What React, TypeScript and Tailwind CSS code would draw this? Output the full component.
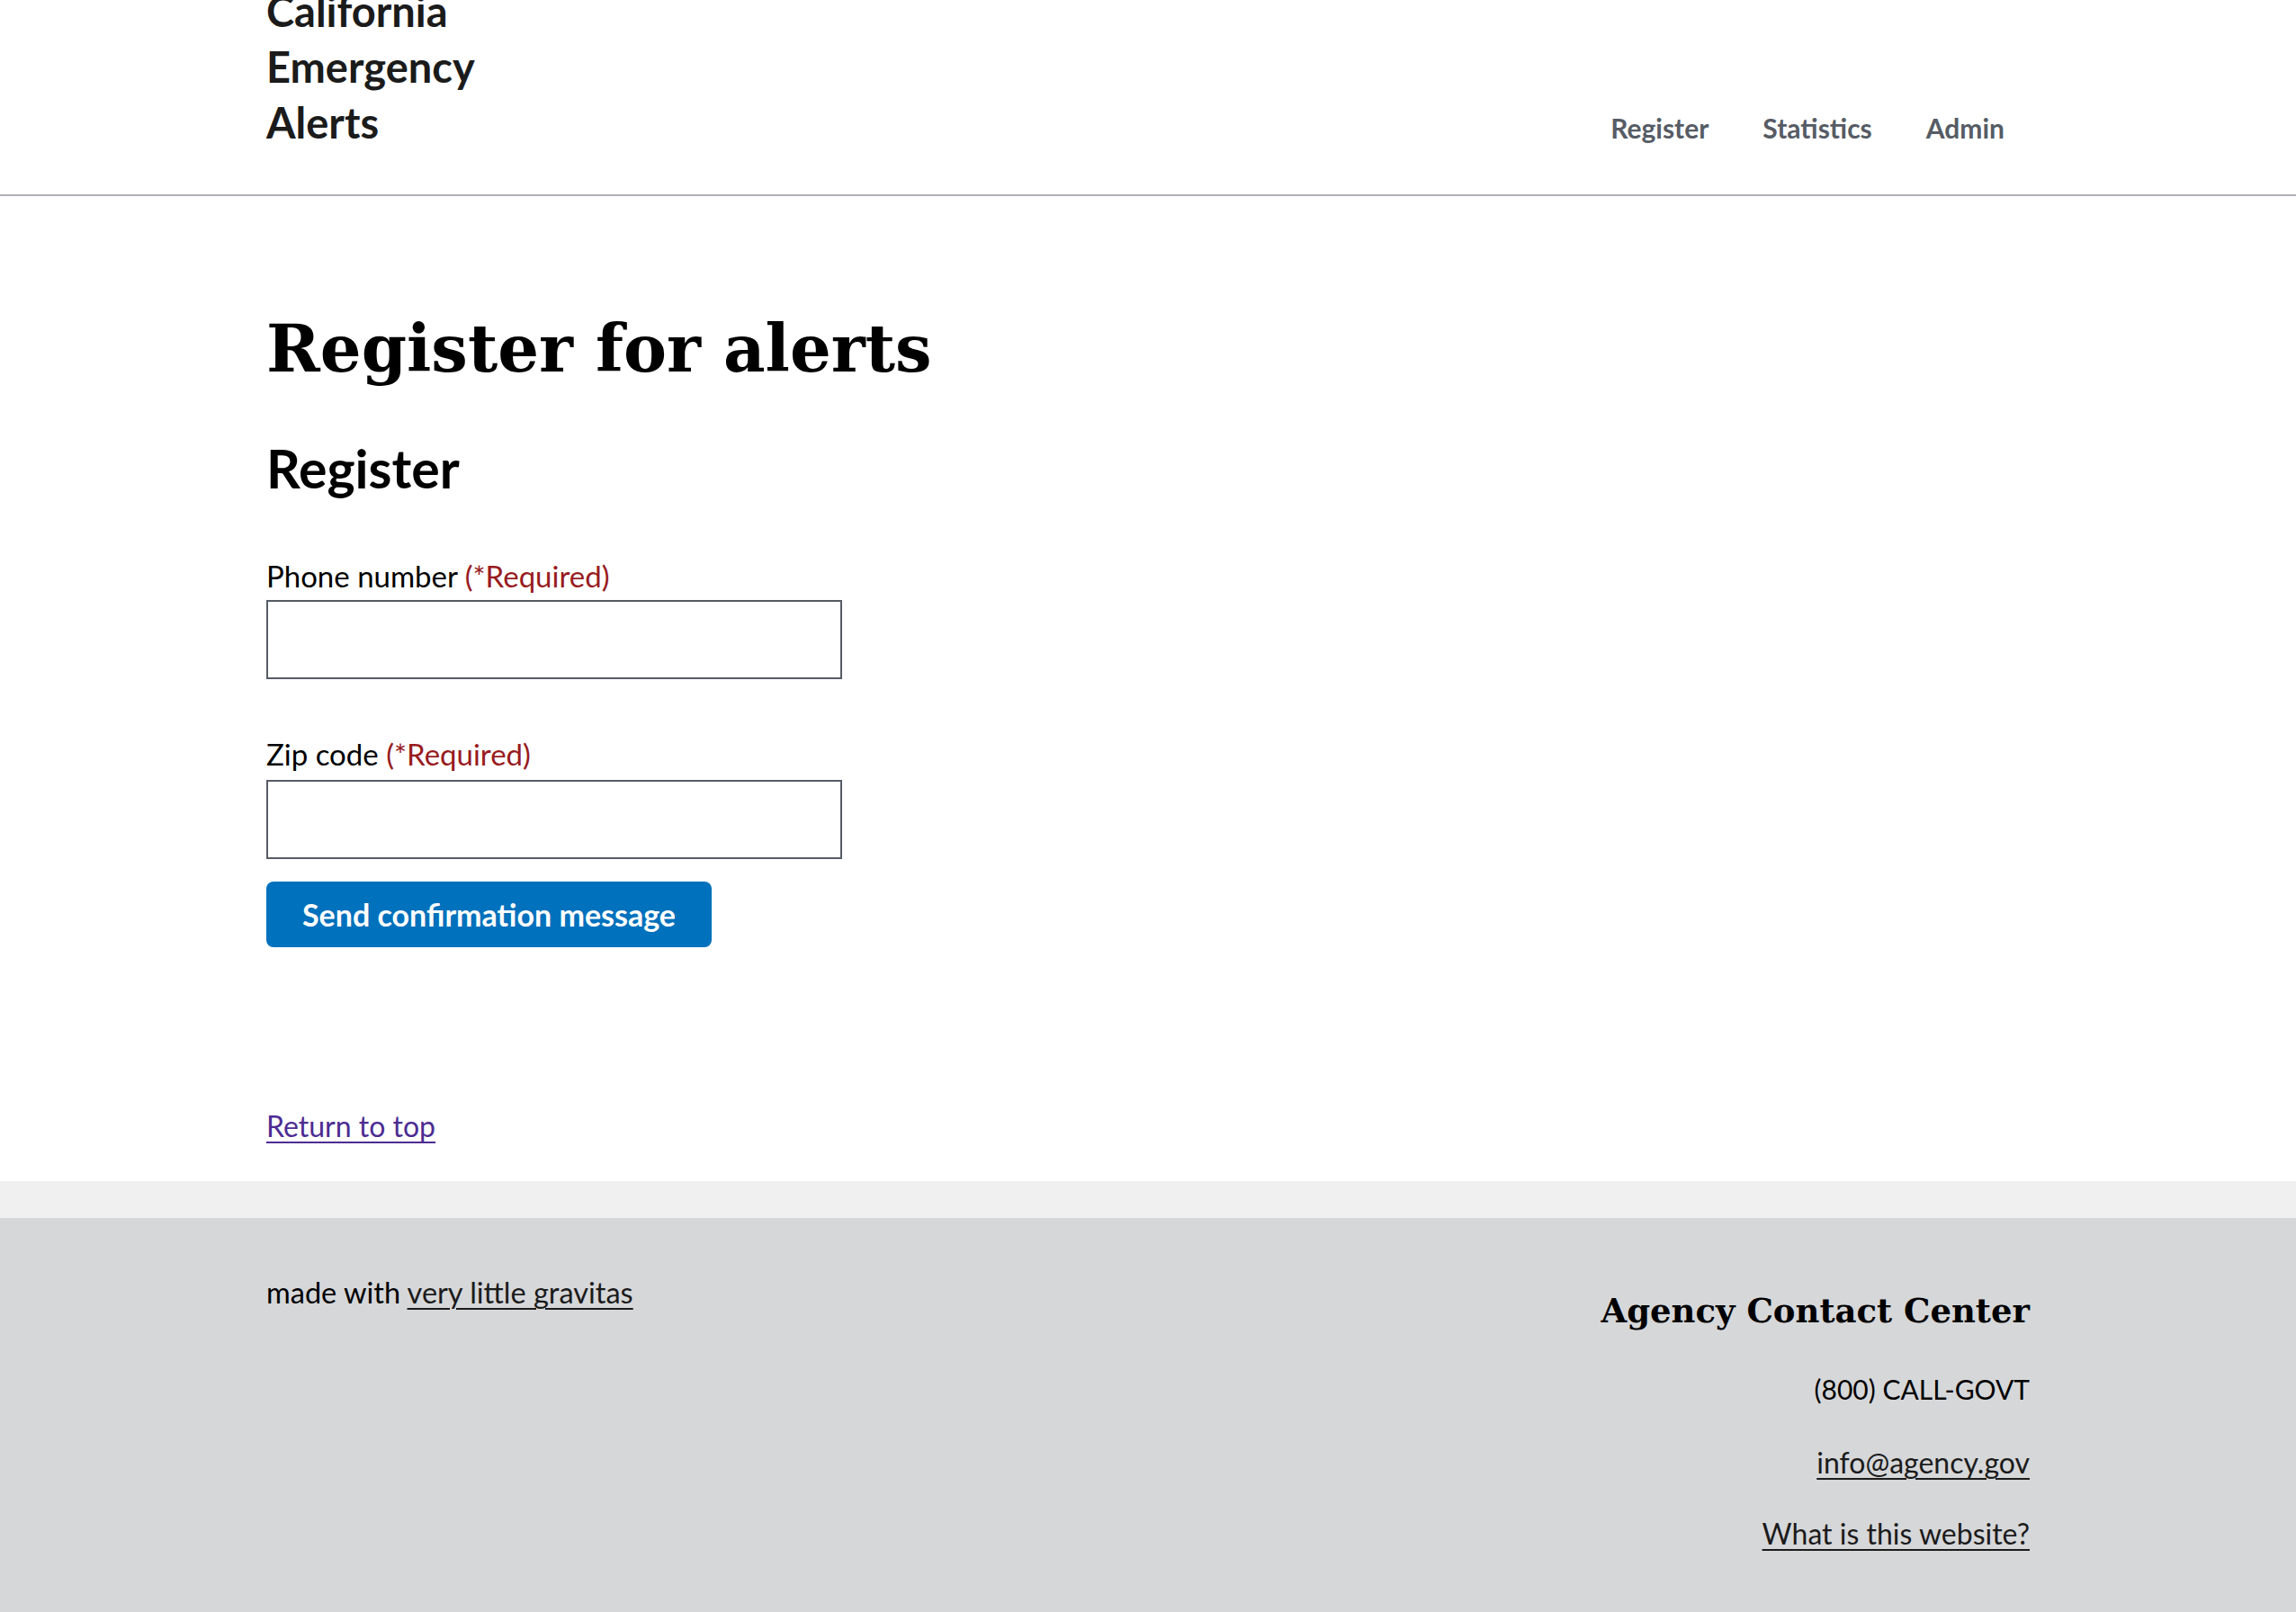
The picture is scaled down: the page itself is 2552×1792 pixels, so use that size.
export default function App() {
  return (
    <div className="min-h-[1792px] bg-[#d6d7d9] [font-family:Lato,sans-serif] text-[#1b1b1b]">
      <header className="bg-white border-b-2 border-[#aeb0b5]">
        <div className="mx-auto w-[1960px] h-[216px] flex items-end justify-between">
          <div className="mb-[49px] text-[47px] leading-[62px] font-bold text-[#1b1b1b]">
            <div>California</div>
            <div>Emergency</div>
            <div>Alerts</div>
          </div>
          <nav className="mb-[54px] flex text-[30px] leading-[40px] font-bold text-[#565c65]">
            <a href="#" className="px-[30px]">Register</a>
            <a href="#" className="px-[30px]">Statistics</a>
            <a href="#" className="pl-[30px] pr-[28px]">Admin</a>
          </nav>
        </div>
      </header>

      <main className="bg-white">
        <div className="mx-auto w-[1960px] pt-[130px] pb-[39px]">
          <h1 className="[font-family:'DejaVu_Serif',serif] text-[72px] leading-[80px] font-bold text-black">
            Register for alerts
          </h1>
          <h2 className="mt-[60px] text-[59px] leading-[66px] font-bold text-black">Register</h2>

          <form className="flex flex-col items-start">
            <label className="mt-[64px] text-[33px] leading-[44px] text-black">
              Phone number <span className="text-[#981b1e]">(*Required)</span>
            </label>
            <input type="text" className="mt-[5px] h-[88px] w-[640px] border-2 border-[#565c65] bg-white" />

            <label className="mt-[61px] text-[33px] leading-[44px] text-black">
              Zip code <span className="text-[#981b1e]">(*Required)</span>
            </label>
            <input type="text" className="mt-[7px] h-[88px] w-[640px] border-2 border-[#565c65] bg-white" />

            <button type="button" className="mt-[25px] h-[73px] px-[40px] rounded-[8px] bg-[#0071bc] text-white text-[34px] font-bold">
              Send confirmation message
            </button>
          </form>

          <div className="mt-[177px] text-[32px] leading-[44px]">
            <a href="#" className="text-[#4c2c92] underline decoration-2 underline-offset-[5px]">Return to top</a>
          </div>
        </div>
      </main>

      <div className="h-[41px] bg-[#f0f0f0]" />

      <footer className="bg-[#d6d7d9]">
        <div className="mx-auto w-[1960px] pt-[61px] pb-[40px] flex items-start justify-between">
          <div className="text-[32.5px] leading-[44px] text-black">
            made with{" "}
            <a href="#" className="text-[#1b1b1b] underline decoration-2 underline-offset-[5px]">very little gravitas</a>
          </div>
          <div className="mt-[20px] flex flex-col items-end text-right">
            <h3 className="[font-family:'DejaVu_Serif',serif] text-[37px] leading-[44px] font-bold text-black">
              Agency Contact Center
            </h3>
            <div className="mt-[43px] text-[30px] leading-[44px] text-black">(800) CALL-GOVT</div>
            <a href="#" className="mt-[38px] text-[32px] leading-[44px] text-[#1b1b1b] underline decoration-2 underline-offset-[5px]">info@agency.gov</a>
            <a href="#" className="mt-[35px] text-[32px] leading-[44px] text-[#1b1b1b] underline decoration-2 underline-offset-[5px]">What is this website?</a>
          </div>
        </div>
      </footer>
    </div>
  );
}
